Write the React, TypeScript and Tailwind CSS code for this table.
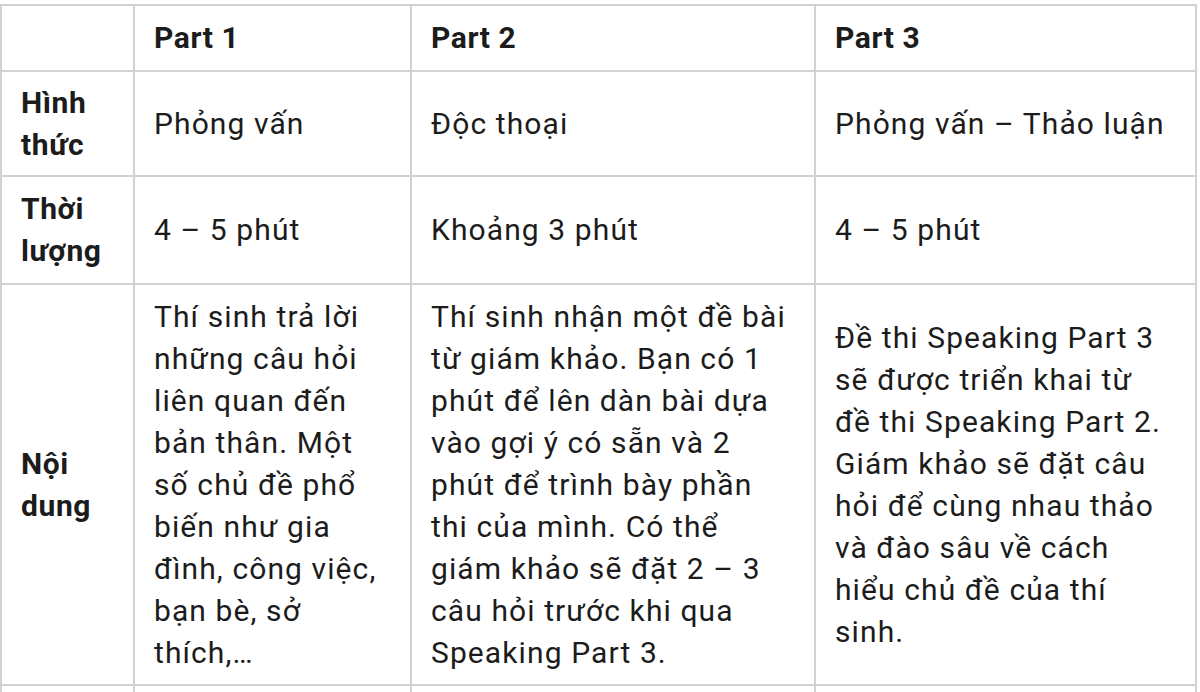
const rows = [
  {
    label: ["Hình", "thức"],
    cells: [["Phỏng vấn"], ["Độc thoại"], ["Phỏng vấn – Thảo luận"]],
    h: "h-[105px]",
  },
  {
    label: ["Thời", "lượng"],
    cells: [["4 – 5 phút"], ["Khoảng 3 phút"], ["4 – 5 phút"]],
    h: "h-[108px]",
  },
  {
    label: ["Nội", "dung"],
    cells: [
      [
        "Thí sinh trả lời",
        "những câu hỏi",
        "liên quan đến",
        "bản thân. Một",
        "số chủ đề phổ",
        "biến như gia",
        "đình, công việc,",
        "bạn bè, sở",
        "thích,…",
      ],
      [
        "Thí sinh nhận một đề bài",
        "từ giám khảo. Bạn có 1",
        "phút để lên dàn bài dựa",
        "vào gợi ý có sẵn và 2",
        "phút để trình bày phần",
        "thi của mình. Có thể",
        "giám khảo sẽ đặt 2 – 3",
        "câu hỏi trước khi qua",
        "Speaking Part 3.",
      ],
      [
        "Đề thi Speaking Part 3",
        "sẽ được triển khai từ",
        "đề thi Speaking Part 2.",
        "Giám khảo sẽ đặt câu",
        "hỏi để cùng nhau thảo",
        "và đào sâu về cách",
        "hiểu chủ đề của thí",
        "sinh.",
      ],
    ],
    h: "h-[401px]",
  },
];

const Lines = ({ lines }: { lines: string[] }) => (
  <>
    {lines.map((l, i) => (
      <span key={i} className="block whitespace-nowrap">
        {l}
      </span>
    ))}
  </>
);

export default function App() {
  return (
    <div className="bg-white min-h-screen pt-[4px] font-['Roboto',sans-serif] text-[#1c1c1c] text-[30px] leading-[42px] tracking-[1.1px]">
      <table className="table-fixed border-collapse w-[1195px]">
        <colgroup>
          <col className="w-[133px]" />
          <col className="w-[277px]" />
          <col className="w-[404px]" />
          <col className="w-[381px]" />
        </colgroup>
        <tbody>
          <tr className="h-[66px]">
            <td className="border-2 border-[#d2d2d2]" />
            {["Part 1", "Part 2", "Part 3"].map((p) => (
              <td key={p} className="border-2 border-[#d2d2d2] pl-[19px] align-middle font-bold tracking-[0.6px]">
                {p}
              </td>
            ))}
          </tr>
          {rows.map((r, i) => (
            <tr key={i} className={r.h}>
              <td className="border-2 border-[#d2d2d2] pl-[19px] align-middle font-bold tracking-[0.6px]">
                <Lines lines={r.label} />
              </td>
              {r.cells.map((c, j) => (
                <td key={j} className="border-2 border-[#d2d2d2] pl-[19px] align-middle">
                  <Lines lines={c} />
                </td>
              ))}
            </tr>
          ))}
          <tr className="h-[40px]">
            <td className="border-2 border-[#d2d2d2]" />
            <td className="border-2 border-[#d2d2d2]" />
            <td className="border-2 border-[#d2d2d2]" />
            <td className="border-2 border-[#d2d2d2]" />
          </tr>
        </tbody>
      </table>
    </div>
  );
}
